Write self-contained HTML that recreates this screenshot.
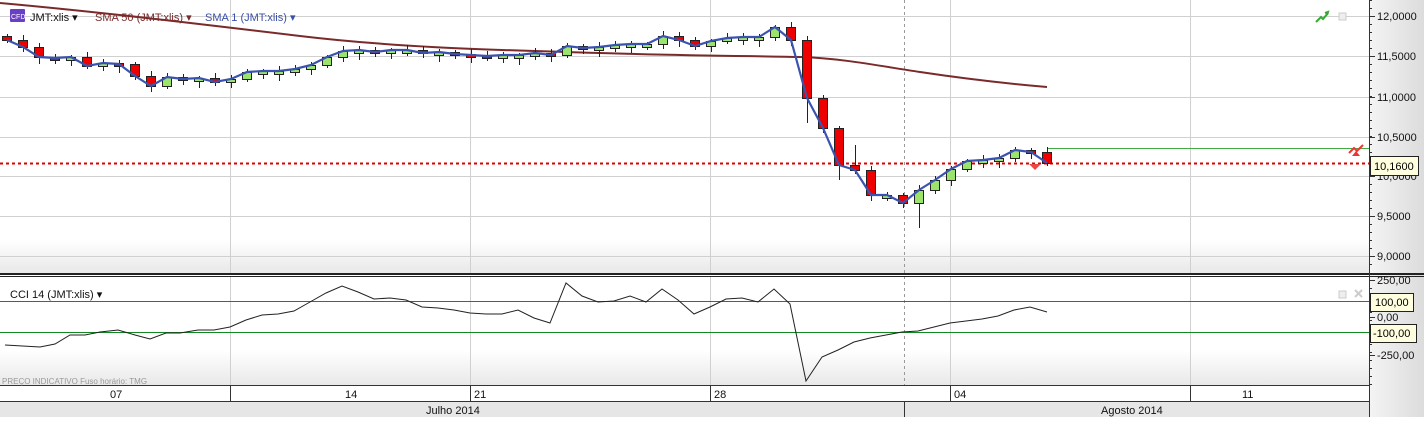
<!DOCTYPE html>
<html><head><meta charset="utf-8"><style>
body{margin:0;width:1424px;height:417px;overflow:hidden;background:#fff;font-family:"Liberation Sans",sans-serif}
svg text{font-family:"Liberation Sans",sans-serif}
</style></head><body>
<svg id="s" width="1424" height="417" xmlns="http://www.w3.org/2000/svg">
<defs>
<linearGradient id="axg" x1="0" x2="1"><stop offset="0" stop-color="#f4f4f4"/><stop offset="1" stop-color="#dcdcdc"/></linearGradient>
<linearGradient id="bt" x1="0" y1="0" x2="0" y2="1"><stop offset="0" stop-color="#fff"/><stop offset="1" stop-color="#e8e8e8"/></linearGradient>
</defs>
<rect x="0" y="0" width="1369" height="273" fill="#fff"/>
<rect x="0" y="240" width="1369" height="33" fill="url(#bt)"/>
<rect x="0" y="350" width="1369" height="36" fill="url(#bt)"/>
<rect x="1369" y="0" width="55" height="417" fill="url(#axg)"/>
<g id="grid" stroke="#d0d0d0" stroke-width="1"></g>
<g id="plot"></g>
<rect x="0" y="273" width="1424" height="2" fill="#222"/>
<rect x="0" y="276" width="1424" height="1" fill="#222"/>
<line x1="1369.5" y1="0" x2="1369.5" y2="417" stroke="#333"/>
<rect x="0" y="386" width="1369" height="15" fill="#fff"/>
<line x1="0" y1="385.5" x2="1369" y2="385.5" stroke="#333"/>
<line x1="0" y1="401.5" x2="1369" y2="401.5" stroke="#333"/>
<rect x="0" y="402" width="1369" height="15" fill="#e6e6e6"/>
<g stroke="#333"><line x1="230.5" y1="386" x2="230.5" y2="401"/><line x1="470.5" y1="386" x2="470.5" y2="401"/><line x1="710.5" y1="386" x2="710.5" y2="401"/><line x1="950.5" y1="386" x2="950.5" y2="401"/><line x1="1190.5" y1="386" x2="1190.5" y2="401"/><line x1="904.5" y1="402" x2="904.5" y2="417"/></g>
<g font-size="11" fill="#111">
<text x="110" y="398">07</text><text x="345" y="398">14</text><text x="474" y="398">21</text><text x="714" y="398">28</text><text x="954" y="398">04</text><text x="1242" y="398">11</text>
<text x="426" y="414">Julho 2014</text><text x="1101" y="414">Agosto 2014</text>
</g>
<text x="2" y="384" font-size="8" fill="#999">PREÇO INDICATIVO   Fuso horário: TMG</text>
<rect x="10" y="9" width="15" height="13" fill="#6a3fc8" rx="1"/><text x="11" y="19" font-size="7" fill="#fff">CFD</text>
<text x="30" y="21" font-size="11" fill="#111">JMT:xlis ▾</text>
<text x="95" y="21" font-size="11" fill="#7a2a2a">SMA 50 (JMT:xlis) ▾</text>
<text x="205" y="21" font-size="11" fill="#3a4fa8">SMA 1 (JMT:xlis) ▾</text>
<text x="10" y="298" font-size="11" fill="#111">CCI 14 (JMT:xlis) ▾</text>
<path d="M1316 22 l5-5 2 2 5-6 M1325 13 l3-1 -1 3" stroke="#3a3" stroke-width="2" fill="none"/>
<rect x="1339" y="13" width="7" height="7" fill="#eee" stroke="#ccc"/>
<rect x="1339" y="291" width="7" height="7" fill="#eee" stroke="#ccc"/>
<path d="M1355 290 l7 7 M1362 290 l-7 7" stroke="#ccc" stroke-width="2"/>
<path d="M1349 153 l5-5 3 3 6-6" stroke="#e33" stroke-width="2" fill="none"/>
<path d="M1352 156 l4-5 4 5z" fill="#e33"/>
<g id="axl" font-size="11" fill="#111"></g>
<rect x="1370.5" y="156.5" width="48" height="19" fill="#ffffe0" stroke="#222"/><text x="1374" y="170" font-size="11">10,1600</text>
<rect x="1370.5" y="293.5" width="43" height="18" fill="#ffffe0" stroke="#222"/><text x="1375" y="306" font-size="11">100,00</text>
<rect x="1370.5" y="324.5" width="46" height="18" fill="#ffffe0" stroke="#222"/><text x="1373" y="337" font-size="11">-100,00</text>
</svg>
<script>
(function(){
var NS="http://www.w3.org/2000/svg";
function el(p,t,a){var e=document.createElementNS(NS,t);for(var k in a)e.setAttribute(k,a[k]);p.appendChild(e);return e;}
var g=document.getElementById('grid'),P=document.getElementById('plot'),A=document.getElementById('axl');
[16,56,97,137,176,216,256].forEach(function(y){el(g,'line',{x1:0,y1:y+.5,x2:1369,y2:y+.5});});
[230,470,710,950,1190].forEach(function(x){el(g,'line',{x1:x+.5,y1:0,x2:x+.5,y2:273});el(g,'line',{x1:x+.5,y1:277,x2:x+.5,y2:386});});
el(g,'line',{x1:904.5,y1:0,x2:904.5,y2:386,stroke:'#999','stroke-dasharray':'3,3'});
var lab=[[16,'12,0000'],[56,'11,5000'],[97,'11,0000'],[137,'10,5000'],[176,'10,0000'],[216,'9,5000'],[256,'9,0000'],[280,'250,00'],[317,'0,00'],[355,'-250,00']];
lab.forEach(function(l){el(A,'line',{x1:1369,y1:l[0]+.5,x2:1375,y2:l[0]+.5,stroke:'#333'});var t=el(A,'text',{x:1377,y:l[0]+4});t.textContent=l[1];});
for(var yy=0;yy<386;yy+=8){if(yy>270&&yy<278)continue;el(A,'line',{x1:1369,y1:yy+.5,x2:1372,y2:yy+.5,stroke:'#333'});}
el(P,'line',{x1:0,y1:301.5,x2:1369,y2:301.5,stroke:'#d22'});
el(P,'line',{x1:0,y1:332.5,x2:1369,y2:332.5,stroke:'#182'});
el(P,'line',{x1:1047,y1:148.5,x2:1369,y2:148.5,stroke:'#4a4'});
el(P,'line',{x1:0,y1:163.5,x2:1369,y2:163.5,stroke:'#d00','stroke-width':2,'stroke-dasharray':'3,3'});
el(P,'path',{d:'M0 3 C100 12 200 24 300 36 S500 50 600 53 S760 56 800 57 S880 66 920 72 S1000 83 1047 87',stroke:'#7a2a2a','stroke-width':2,fill:'none'});
var c=[40,47,57,58,57,66,63,64,76,86,77,79,78,82,79,72,71,71,69,65,57,51,50,52,50,50,53,52,54,55,56,55,55,53,55,46,48,47,45,44,44,36,40,46,41,38,37,37,27,40,98,128,165,170,195,195,203,190,180,169,161,160,158,150,152,163];
var pts=[];
for(var i=0;i<c.length;i++){var x=7+16*i,cl=c[i],op=i?c[i-1]:36;var tp=Math.min(op,cl),h=Math.max(Math.abs(op-cl),3);
var wl=(i*7%5)+3,wh=(i*3%4)+2;if(i==50)wl=25;if(i==52)wl=15;if(i==57)wl=25;if(i==53)wh=20;
el(P,'line',{x1:x+.5,y1:tp-wh,x2:x+.5,y2:tp+h+wl,stroke:'#222'});
el(P,'rect',{x:x-4.5,y:tp+.5,width:9,height:h,fill:cl>op?'#e00':'#9be36a',stroke:'#222'});
pts.push(x+','+cl);}
el(P,'polyline',{points:pts.join(' '),stroke:'#3b53b0','stroke-width':2.2,fill:'none'});
var cci='5,345 40,347 55,344 70,335 85,335 100,332 118,330 135,335 150,339 166,333 180,333 198,330 214,330 230,327 246,320 262,315 278,314 294,311 310,302 326,293 342,286 358,292 374,299 390,298 406,300 422,307 438,308 454,310 470,313 486,314 502,314 518,310 534,318 550,323 566,283 582,296 598,302 614,301 630,296 646,302 662,289 678,300 694,314 710,307 726,299 742,298 758,302 774,289 790,304 806,381 822,357 838,350 854,342 870,338 886,335 902,332 918,331 934,327 950,323 966,321 982,319 998,316 1014,310 1030,307 1047,312';
el(P,'polyline',{points:cci,stroke:'#222','stroke-width':1,fill:'none'});
el(P,'path',{d:'M1029 164 l6 6 6-6z',fill:'#e44'});
})();
</script>
</body></html>
